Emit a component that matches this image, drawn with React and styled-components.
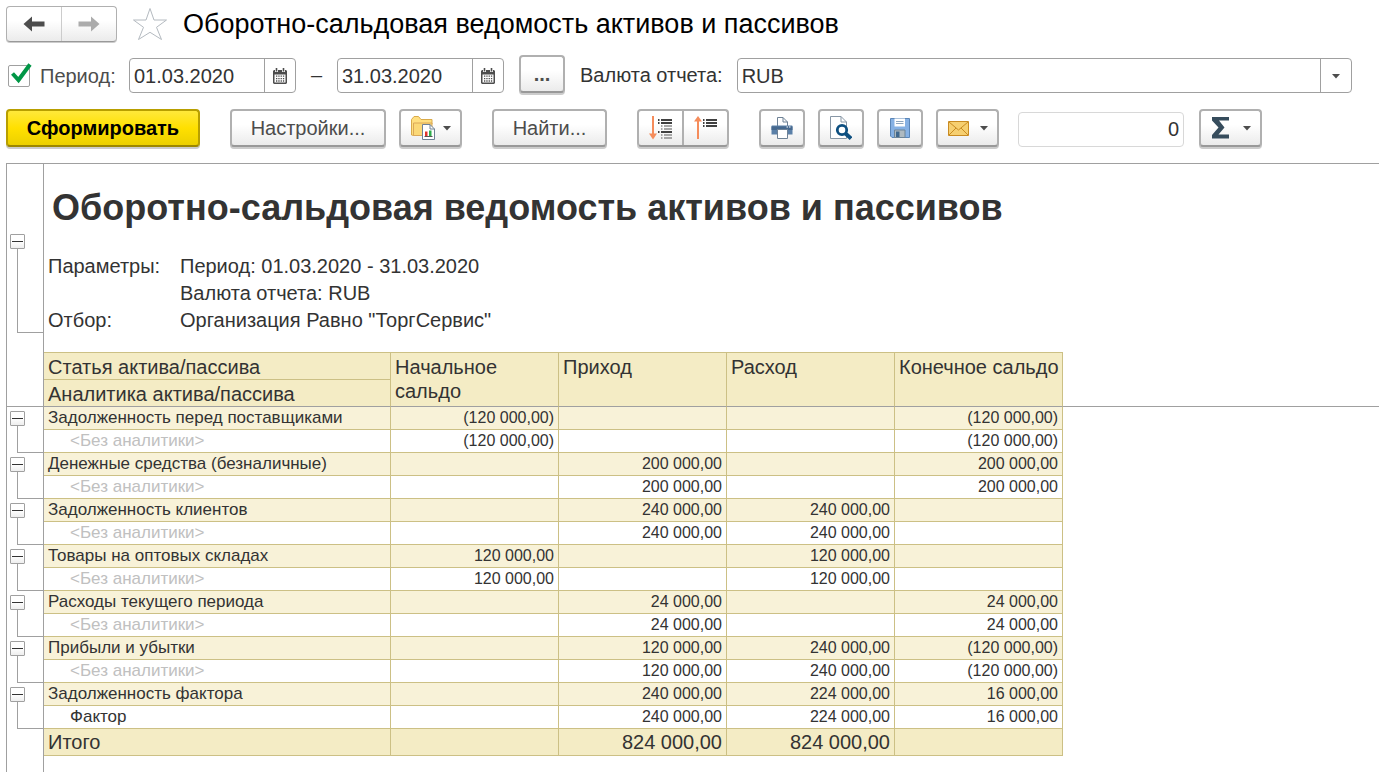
import React, { useState } from "react";
import styled, { createGlobalStyle, css } from "styled-components";

const COLORS = {
  text: "#333333",
  label: "#4d4d4d",
  muted: "#c0c0c0",
  line: "#a0a0a0",
  cellLine: "#ccc085",
  header: "#f4ecc5",
  group: "#f8f2d8",
  orange: "#f58c5b",
};

const NONE = "<Без аналитики>";

const GROUPS = [
  {
    title: "Задолженность перед поставщиками",
    detail: NONE,
    values: ["(120 000,00)", "", "", "(120 000,00)"],
  },
  {
    title: "Денежные средства (безналичные)",
    detail: NONE,
    values: ["", "200 000,00", "", "200 000,00"],
  },
  {
    title: "Задолженность клиентов",
    detail: NONE,
    values: ["", "240 000,00", "240 000,00", ""],
  },
  {
    title: "Товары на оптовых складах",
    detail: NONE,
    values: ["120 000,00", "", "120 000,00", ""],
  },
  {
    title: "Расходы текущего периода",
    detail: NONE,
    values: ["", "24 000,00", "", "24 000,00"],
  },
  {
    title: "Прибыли и убытки",
    detail: NONE,
    values: ["", "120 000,00", "240 000,00", "(120 000,00)"],
  },
  {
    title: "Задолженность фактора",
    detail: "Фактор",
    values: ["", "240 000,00", "224 000,00", "16 000,00"],
  },
];

const TOTALS = ["", "824 000,00", "824 000,00", ""];

const App = () => {
  return (
    <Page>
      <GlobalStyle />
      <TitleBar />
      <PeriodBar />
      <CommandBar />
      <Report />
    </Page>
  );
};

const TitleBar = () => (
  <TitleRow>
    <NavGroup>
      <NavButton type="button" aria-label="Назад">
        <ArrowIcon color="#4d4d4d" />
      </NavButton>
      <NavButton type="button" aria-label="Вперед">
        <ArrowIcon color="#acacac" flip />
      </NavButton>
    </NavGroup>
    <StarButton type="button" aria-label="Избранное">
      <svg width="36" height="34" viewBox="0 0 36 34">
        <path
          d="M18 1.5L22 13H34.5L24.5 20.3L29.5 32.5L18 25.3L6.5 32.5L11.5 20.3L1.5 13H14Z"
          fill="#fff"
          stroke="#b4bac0"
        />
      </svg>
    </StarButton>
    <WindowTitle>Оборотно-сальдовая ведомость активов и пассивов</WindowTitle>
  </TitleRow>
);

const PeriodBar = () => {
  const [enabled, setEnabled] = useState(true);

  return (
    <PeriodRow>
      <CheckLabel>
        <CheckWrapper>
          <CheckInput
            type="checkbox"
            checked={enabled}
            onChange={(event) => setEnabled(event.target.checked)}
          />
          {enabled && (
            <CheckMark width="22" height="22" viewBox="0 0 22 22">
              <path
                d="M2.5 10.5L8.5 17L20 1.5"
                fill="none"
                stroke="#009646"
                strokeWidth="4"
              />
            </CheckMark>
          )}
        </CheckWrapper>
        Период:
      </CheckLabel>
      <DateField label="Начало периода" value="01.03.2020" />
      <Dash>–</Dash>
      <DateField label="Конец периода" value="31.03.2020" />
      <MoreButton type="button" aria-label="Выбрать период">
        ...
      </MoreButton>
      <FieldLabel htmlFor="currency">Валюта отчета:</FieldLabel>
      <SelectBox>
        <Select id="currency" defaultValue="RUB">
          <option>RUB</option>
        </Select>
        <SelectArrow>
          <Caret />
        </SelectArrow>
      </SelectBox>
    </PeriodRow>
  );
};

const DateField = ({ label, value }) => (
  <DateBox>
    <DateInput type="text" aria-label={label} defaultValue={value} />
    <DateButton type="button" aria-label="Открыть календарь">
      <CalendarIcon />
    </DateButton>
  </DateBox>
);

const CommandBar = () => (
  <CommandRow>
    <PrimaryButton type="button">Сформировать</PrimaryButton>
    <WideButton type="button" $width={156} $gap={30}>
      Настройки...
    </WideButton>
    <MenuButton type="button" $gap={13} aria-label="Варианты отчета">
      <FolderIcon />
      <Caret />
    </MenuButton>
    <WideButton type="button" $width={115} $gap={30}>
      Найти...
    </WideButton>
    <SplitGroup>
      <SplitButton type="button" aria-label="Развернуть группы">
        <ExpandIcon />
      </SplitButton>
      <SplitButton type="button" aria-label="Свернуть группы">
        <CollapseIcon />
      </SplitButton>
    </SplitGroup>
    <IconButton type="button" $gap={30} aria-label="Печать">
      <PrinterIcon />
    </IconButton>
    <IconButton type="button" $gap={13} aria-label="Предварительный просмотр">
      <PreviewIcon />
    </IconButton>
    <IconButton type="button" $gap={13} aria-label="Сохранить">
      <DiskIcon />
    </IconButton>
    <MenuButton type="button" $gap={13} aria-label="Отправить">
      <MailIcon />
      <Caret />
    </MenuButton>
    <SumInput type="text" aria-label="Сумма" defaultValue="0" />
    <MenuButton type="button" $gap={15} aria-label="Функция">
      <SigmaIcon />
      <Caret />
    </MenuButton>
  </CommandRow>
);

const Report = () => (
  <Sheet>
    <Table>
      <colgroup>
        <Col $width={38} />
        <Col $width={347} />
        <Col $width={168} />
        <Col $width={168} />
        <Col $width={168} />
        <Col $width={168} />
        <Col />
      </colgroup>
      <thead>
        <Row $height={169}>
          <Gutter>
            <Group top={70} height={84} />
          </Gutter>
          <PlainCell colSpan={6}>
            <ReportTitle>
              Оборотно-сальдовая ведомость активов и пассивов
            </ReportTitle>
            <Params>
              <dt>Параметры:</dt>
              <dd>Период: 01.03.2020 - 31.03.2020</dd>
              <dd>Валюта отчета: RUB</dd>
              <dt>Отбор:</dt>
              <dd>Организация Равно "ТоргСервис"</dd>
            </Params>
          </PlainCell>
        </Row>
        <Row $height={19}>
          <Gutter />
          <SpacerCell colSpan={5} />
          <PlainCell />
        </Row>
        <Row $height={27}>
          <Gutter rowSpan={2} $frozen />
          <HeadCell scope="col">Статья актива/пассива</HeadCell>
          <HeadCell scope="col" rowSpan={2} $frozen>
            Начальное сальдо
          </HeadCell>
          <HeadCell scope="col" rowSpan={2} $frozen>
            Приход
          </HeadCell>
          <HeadCell scope="col" rowSpan={2} $frozen>
            Расход
          </HeadCell>
          <HeadCell scope="col" rowSpan={2} $frozen $nowrap>
            Конечное сальдо
          </HeadCell>
          <PlainCell rowSpan={2} $frozen />
        </Row>
        <Row $height={27}>
          <HeadCell scope="col" $frozen>
            Аналитика актива/пассива
          </HeadCell>
        </Row>
      </thead>
      <tbody>
        {GROUPS.map((group) => (
          <ReportGroup key={group.title} {...group} />
        ))}
        <Row $height={27}>
          <Gutter />
          <TotalCell as="th" scope="row" $left>
            Итого
          </TotalCell>
          {TOTALS.map((value, index) => (
            <TotalCell key={index}>{value}</TotalCell>
          ))}
          <PlainCell />
        </Row>
        <tr>
          <Gutter />
          <PlainCell colSpan={6} />
        </tr>
      </tbody>
    </Table>
  </Sheet>
);

const ReportGroup = ({ title, detail, values }) => (
  <>
    <Row $height={23}>
      <Gutter rowSpan={2}>
        <Group top={4} height={27} />
      </Gutter>
      <NameCell scope="row" $group>
        {title}
      </NameCell>
      {values.map((value, index) => (
        <Cell key={index} $group>
          {value}
        </Cell>
      ))}
      <PlainCell rowSpan={2} />
    </Row>
    <Row $height={23}>
      <DetailCell scope="row" $muted={detail === NONE}>
        {detail}
      </DetailCell>
      {values.map((value, index) => (
        <Cell key={index}>{value}</Cell>
      ))}
    </Row>
  </>
);

const Group = ({ top, height }) => (
  <GroupWrapper $top={top}>
    <Toggle type="button" aria-label="Свернуть" />
    <Bracket $height={height} />
  </GroupWrapper>
);

const ArrowIcon = ({ color, flip }) => (
  <svg width="22" height="16" viewBox="0 0 22 16">
    <path
      d="M0.5 8L9 0.5V5.5H21.5V10.5H9V15.5Z"
      fill={color}
      transform={flip ? "matrix(-1 0 0 1 22 0)" : undefined}
    />
  </svg>
);

const Caret = () => (
  <svg width="8" height="6" viewBox="0 0 8 6">
    <path d="M0 1H8L4 5.5Z" fill="#4d4d4d" />
  </svg>
);

const CalendarIcon = () => (
  <svg width="14" height="16" viewBox="0 0 14 16">
    <path d="M1 2H13L14 3V15L13 16H1L0 15V3Z" fill="#4d4d4d" />
    <path d="M1.5 6.5H12.5V14.5H1.5Z" fill="#fff" />
    <path d="M2 1H5V4H2ZM9 1H12V4H9Z" fill="#fff" />
    <path d="M2.7 0H4.3V3.4H2.7ZM9.7 0H11.3V3.4H9.7Z" fill="#4d4d4d" />
    <path
      d="M3 8.2H11.2M3 10.6H11.2M3 13H11.2"
      stroke="#4d4d4d"
      strokeWidth="1.3"
      strokeDasharray="1.3 1"
    />
  </svg>
);

const FolderIcon = () => (
  <svg width="24" height="24" viewBox="0 0 24 24">
    <path
      d="M0.5 19V3.5L3 0.5H7.5L10 3.5H21V8H3V19.5Z"
      fill="#ffdf80"
      stroke="#d9aa4a"
    />
    <path d="M2.5 19.5V7H21V19.5Z" fill="#fbd877" stroke="#dba858" />
    <path d="M11.5 8.5H19L23.5 13V23.5H11.5Z" fill="#fff" stroke="#6f8296" />
    <path d="M19 8.5V13H23.5" fill="none" stroke="#6f8296" />
    <path d="M14 15.5H16.5V20H14Z" fill="#e2352b" />
    <path d="M18 14.5H20.5V20H18Z" fill="#2fae4d" />
    <path d="M13.5 20.5H21.5" stroke="#555" />
  </svg>
);

const ExpandIcon = () => (
  <svg width="24" height="24" viewBox="0 0 24 24">
    <path d="M4 0V19" stroke={COLORS.orange} strokeWidth="2" />
    <path d="M0 17.5H8L4 23.5Z" fill={COLORS.orange} />
    <path
      d="M9 4H10.5M12 4H23M9 7H10.5M12 7H23M9 16H10.5M12 16H23"
      stroke="#404040"
      strokeWidth="1.8"
    />
    <path
      d="M12 10H13.5M15 10H23M12 13H13.5M15 13H23M12 19H13.5M15 19H23M12 22H13.5M15 22H23"
      stroke="#8c8c8c"
      strokeWidth="1.6"
    />
  </svg>
);

const CollapseIcon = () => (
  <svg width="24" height="24" viewBox="0 0 24 24">
    <path d="M4 4V23" stroke={COLORS.orange} strokeWidth="2" />
    <path d="M0 5.5H8L4 0Z" fill={COLORS.orange} />
    <path
      d="M9 4H10.5M12 4H23M9 7H10.5M12 7H23M9 10H10.5M12 10H23"
      stroke="#404040"
      strokeWidth="1.8"
    />
  </svg>
);

const PrinterIcon = () => (
  <svg width="22" height="22" viewBox="0 0 22 22">
    <path d="M6.5 10V0.5H12L16.5 5V10" fill="#fff" stroke="#6f8296" />
    <path d="M12 0.5V5H16.5" fill="none" stroke="#6f8296" />
    <path d="M1 8.5H21L21.5 9V17.5H0.5V9Z" fill="#5b80a8" />
    <path d="M0.5 9.5H21.5V13H0.5Z" fill="#46698f" />
    <path d="M15.5 10H17M18 10H19.5" stroke="#fff" />
    <path d="M6.5 12.5H16.5V21.5H6.5Z" fill="#fff" stroke="#6f8296" />
  </svg>
);

const PreviewIcon = () => (
  <svg width="22" height="24" viewBox="0 0 22 24">
    <path d="M0.5 0.5H11L16.5 6V22.5H0.5Z" fill="#fff" stroke="#8796a5" />
    <path d="M11 0.5V6H16.5" fill="none" stroke="#8796a5" />
    <circle
      cx="12"
      cy="14"
      r="4.7"
      fill="#fff"
      stroke="#0d4f80"
      strokeWidth="2.8"
    />
    <path d="M15.5 17.5L21 22.5" stroke="#0d4f80" strokeWidth="3.8" />
  </svg>
);

const DiskIcon = () => (
  <svg width="20" height="20" viewBox="0 0 20 20">
    <path d="M0.5 0.5H19.5V19.5H2L0.5 18Z" fill="#86b1e4" stroke="#5b86b8" />
    <path d="M4.5 0.5H15V8.5H4.5Z" fill="#fff" />
    <path d="M6 3.5H13.5M6 5.5H13.5" stroke="#8fa6be" />
    <path d="M4.5 12H15V19.5H4.5Z" fill="#aeb9c0" stroke="#6d8497" />
    <path d="M6 13.5H9.5V19H6Z" fill="#40688e" />
  </svg>
);

const MailIcon = () => (
  <svg width="21" height="15" viewBox="0 0 21 15">
    <path d="M0.5 0.5H20.5V14.5H0.5Z" fill="#f6cf70" stroke="#c98b22" />
    <path
      d="M1 1L10.5 9L20 1M1 14L8 7M20 14L13 7"
      fill="none"
      stroke="#c98b22"
    />
  </svg>
);

const SigmaIcon = () => (
  <svg width="19" height="22" viewBox="0 0 19 22">
    <path
      d="M1 0H18V3.5H8L13.5 10.5L7.5 17.5H18V21.5H1V18L7.5 10.5L1 3.5Z"
      fill="#364c5c"
    />
  </svg>
);

const GlobalStyle = createGlobalStyle`
  *, *::before, *::after {
    box-sizing: border-box;
  }

  body {
    margin: 0;
    background-color: #fff;
    color: ${COLORS.text};
    font: 20px/24px "Liberation Sans", Arial, sans-serif;
  }

  button, input, select {
    margin: 0;
    font: inherit;
    color: inherit;
  }

  svg {
    display: block;
    flex-shrink: 0;
  }
`;

const Page = styled.main`
  display: flex;
  flex-direction: column;
  min-height: 100vh;
  padding: 6px 0 0 6px;
`;

const TitleRow = styled.header`
  display: flex;
  align-items: center;
  height: 36px;
`;

const NavGroup = styled.div`
  display: flex;
  width: 111px;
  height: 36px;
  border: 1px solid #b0b0b0;
  border-bottom-color: #999;
  border-radius: 4px;
  background-image: linear-gradient(#fff 40%, #ebebeb);
  box-shadow: 0 1px 0 #ccc;
`;

const NavButton = styled.button`
  display: flex;
  flex: 1;
  align-items: center;
  justify-content: center;
  padding: 0;
  border: 0;
  background: none;

  & + & {
    border-left: 1px solid #ccc;
  }
`;

const StarButton = styled.button`
  margin: 0 15px;
  padding: 0;
  border: 0;
  background: none;
`;

const WindowTitle = styled.h1`
  margin: 0;
  font-size: 27px;
  line-height: 32px;
  font-weight: 400;
  color: #000;
  white-space: nowrap;
`;

const PeriodRow = styled.div`
  display: flex;
  align-items: flex-end;
  margin-top: 13px;
  padding-right: 27px;
`;

const CheckLabel = styled.label`
  display: flex;
  align-items: center;
  gap: 10px;
  width: 123px;
  height: 35px;
  padding-left: 2px;
  color: ${COLORS.label};
`;

const CheckWrapper = styled.span`
  position: relative;
  display: flex;
`;

const CheckInput = styled.input`
  appearance: none;
  width: 22px;
  height: 22px;
  border: 1px solid ${COLORS.line};
  border-radius: 2px;
  background-color: #fff;
`;

const CheckMark = styled.svg`
  position: absolute;
  top: -2px;
  left: 2px;
  pointer-events: none;
`;

const fieldBox = css`
  height: 35px;
  border: 1px solid ${COLORS.line};
  border-radius: 4px;
  background-color: #fff;
`;

const DateBox = styled.div`
  ${fieldBox}
  display: flex;
  width: 167px;
`;

const DateInput = styled.input`
  flex: 1;
  min-width: 0;
  padding: 0 4px;
  border: 0;
  background: none;
`;

const DateButton = styled.button`
  display: flex;
  align-items: center;
  justify-content: center;
  width: 31px;
  padding: 0;
  border: 0;
  border-left: 1px solid ${COLORS.line};
  background: none;
`;

const Dash = styled.span`
  width: 41px;
  line-height: 35px;
  text-align: center;
`;

const FieldLabel = styled.label`
  margin: 0 14px 0 15px;
  line-height: 35px;
  white-space: nowrap;
`;

const SelectBox = styled.div`
  ${fieldBox}
  display: grid;
  flex: 1;
  grid-template-columns: 1fr 31px;
`;

const Select = styled.select`
  grid-area: 1 / 1 / 2 / 3;
  appearance: none;
  padding: 0 4px;
  border: 0;
  background: none;
`;

const SelectArrow = styled.span`
  grid-area: 1 / 2 / 2 / 3;
  display: flex;
  align-items: center;
  justify-content: center;
  border-left: 1px solid ${COLORS.line};
  pointer-events: none;
`;

const CommandRow = styled.div`
  display: flex;
  align-items: flex-end;
  margin: 16px 0;
`;

const raised = css`
  height: 38px;
  border: 2px solid #b0b0b0;
  border-bottom-color: #999;
  border-radius: 4px;
  background-image: linear-gradient(#fff 40%, #ebebeb);
  box-shadow: 0 2px 0 #ccc;
`;

const Button = styled.button`
  ${raised}
  display: flex;
  align-items: center;
  justify-content: center;
  flex-shrink: 0;
  margin-left: ${({ $gap = 0 }) => $gap}px;
  padding: 0;
  color: ${COLORS.label};
`;

const PrimaryButton = styled(Button)`
  width: 194px;
  border-color: #b89f00;
  border-bottom-color: #9c8700;
  background-image: linear-gradient(#ffe83b, #ffe000 50%, #ecd000);
  font-weight: 700;
  color: #000;
`;

const WideButton = styled(Button)`
  width: ${({ $width }) => $width}px;
`;

const MoreButton = styled(Button)`
  width: 46px;
  margin-left: 15px;
  font-weight: 700;
`;

const IconButton = styled(Button)`
  width: 46px;
`;

const MenuButton = styled(Button)`
  justify-content: space-between;
  width: 63px;
  padding: 0 9px 0 10px;
`;

const SplitGroup = styled.div`
  ${raised}
  display: flex;
  width: 92px;
  margin-left: 30px;
`;

const SplitButton = styled.button`
  display: flex;
  flex: 1;
  align-items: center;
  justify-content: center;
  padding: 0;
  border: 0;
  background: none;

  & + & {
    border-left: 2px solid #b0b0b0;
  }
`;

const SumInput = styled.input`
  ${fieldBox}
  width: 166px;
  margin-left: 19px;
  padding: 0 4px;
  border-color: #d8d8d8;
  text-align: right;
`;

const Sheet = styled.section`
  display: flex;
  flex: 1;
  border-top: 1px solid ${COLORS.line};
`;

const Table = styled.table`
  width: 100%;
  table-layout: fixed;
  border-spacing: 0;
`;

const Col = styled.col`
  width: ${({ $width }) => ($width ? `${$width}px` : "auto")};
`;

const Row = styled.tr`
  height: ${({ $height }) => $height}px;
`;

const frozenLine = css`
  border-bottom: 1px solid ${COLORS.line};
`;

const Gutter = styled.td`
  padding: 0;
  border: 0 solid ${COLORS.line};
  border-width: 0 1px;
  vertical-align: top;
  ${({ $frozen }) => $frozen && frozenLine}
`;

const GroupWrapper = styled.div`
  padding: ${({ $top }) => $top}px 0 0 3px;
`;

const Toggle = styled.button`
  display: flex;
  align-items: center;
  width: 15px;
  height: 15px;
  padding: 0 1px;
  border: 1px solid ${COLORS.line};
  border-radius: 1px;
  background-image: linear-gradient(#fff 50%, #eee);

  &::before {
    content: "";
    flex: 1;
    height: 1px;
    background-color: ${COLORS.text};
  }
`;

const Bracket = styled.div`
  height: ${({ $height }) => $height}px;
  margin-left: 7px;
  border: 0 solid ${COLORS.line};
  border-width: 0 0 1px 1px;
`;

const PlainCell = styled.td`
  padding: 0;
  vertical-align: top;
  ${({ $frozen }) => $frozen && frozenLine}
`;

const SpacerCell = styled(PlainCell)`
  border-bottom: 1px solid ${COLORS.cellLine};
`;

const ReportTitle = styled.h2`
  margin: 0;
  padding: 22px 0 23px 8px;
  font-size: 36px;
  line-height: 44px;
  white-space: nowrap;
`;

const Params = styled.dl`
  display: grid;
  grid-template-columns: 132px 1fr;
  margin: 0;
  padding-left: 4px;
  line-height: 27px;

  dt {
    grid-column: 1;
  }

  dd {
    grid-column: 2;
    margin: 0;
  }
`;

const cellBase = css`
  padding: 0 4px;
  border: 0 solid ${COLORS.cellLine};
  border-width: 0 1px 1px 0;
  font-weight: 400;
`;

const HeadCell = styled.th`
  ${cellBase}
  padding-top: 2px;
  background-color: ${COLORS.header};
  line-height: 24px;
  text-align: left;
  vertical-align: top;
  white-space: ${({ $nowrap }) => ($nowrap ? "nowrap" : "normal")};
  ${({ $frozen }) => $frozen && frozenLine}
`;

const Cell = styled.td`
  ${cellBase}
  background-color: ${({ $group }) => ($group ? COLORS.group : "#fff")};
  font-size: 16px;
  line-height: 22px;
  text-align: ${({ $left }) => ($left ? "left" : "right")};
  white-space: nowrap;
`;

const NameCell = styled.th`
  ${cellBase}
  background-color: ${({ $group }) => ($group ? COLORS.group : "#fff")};
  font-size: 17px;
  line-height: 22px;
  text-align: left;
  white-space: nowrap;
`;

const DetailCell = styled(NameCell)`
  padding-left: 26px;
  color: ${({ $muted }) => ($muted ? COLORS.muted : "inherit")};
`;

const TotalCell = styled(Cell)`
  background-color: ${COLORS.header};
  font-size: 20px;
  line-height: 26px;
`;

export default App;
